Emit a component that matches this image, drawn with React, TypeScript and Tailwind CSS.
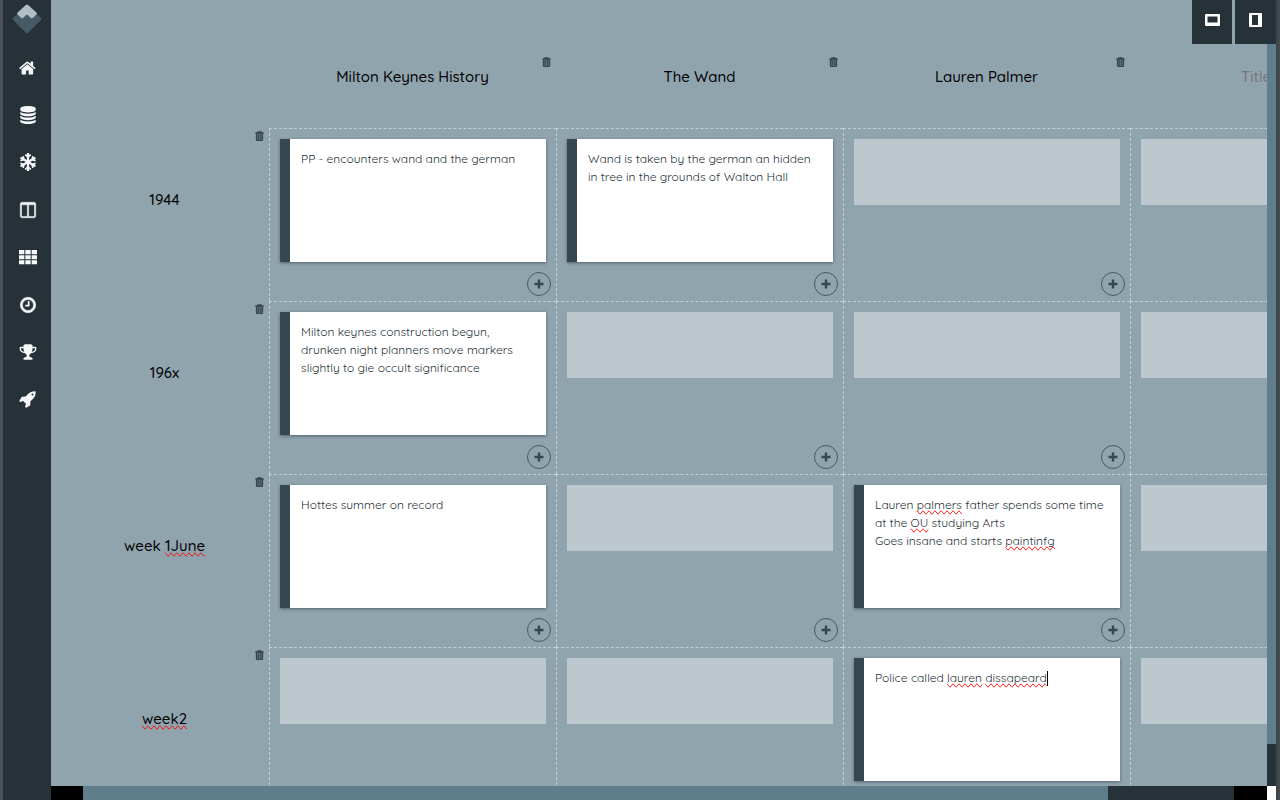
import type { ReactNode } from "react";
import { FaSnowflake } from "react-icons/fa";

type NavItem = { label: string; icon: ReactNode };
type Row = { label: ReactNode; name: string; cells: (ReactNode | null)[] };

function Glyph({ d, bold = false }: { d: string; bold?: boolean }) {
  return (
    <svg viewBox="0 0 1792 1792" className="size-[18px]" fill="currentColor" aria-hidden="true">
      <path d={d} stroke="currentColor" strokeWidth={bold ? 50 : 0} />
    </svg>
  );
}

function Misspelt({ children }: { children: ReactNode }) {
  return <span className="[text-decoration-line:spelling-error]">{children}</span>;
}

function TrashIcon() {
  return (
    <svg viewBox="0 0 9 10" className="h-[10px] w-[9px]" aria-hidden="true">
      <path
        d="M.3 2h8.400M3 2V.8h3V2M1.500 2v6.500q0 1 1 1h4q1 0 1-1V2"
        fill="#5a6b74"
        stroke="#37474f"
        strokeWidth="1.300"
      />
      <path d="M3.400 3.500v4.500M5.600 3.500v4.500" stroke="#37474f" strokeWidth=".8" />
    </svg>
  );
}

const navItems: NavItem[] = [
  {
    label: "Home",
    icon: (
      <Glyph d="M1408 992v480q0 26-19 45t-45 19h-384v-384h-256v384h-384q-26 0-45-19t-19-45v-480q0-1 .5-3t.5-3l575-474 575 474q1 2 1 6zm223-69l-62 74q-8 9-21 11h-3q-13 0-21-7l-692-577-692 577q-12 8-24 7-13-2-21-11l-62-74q-8-10-7-23.5t11-21.5l719-599q32-26 76-26t76 26l244 204v-195q0-14 9-23t23-9h192q14 0 23 9t9 23v408l219 182q10 8 11 21.5t-7 23.5z" />
    ),
  },
  {
    label: "Database",
    icon: (
      <Glyph d="M896 768q237 0 443-43t325-127v170q0 69-103 128t-280 93.5-385 34.5-385-34.5-280-93.5-103-128v-170q119 84 325 127t443 43zm0 768q237 0 443-43t325-127v170q0 69-103 128t-280 93.5-385 34.5-385-34.5-280-93.5-103-128v-170q119 84 325 127t443 43zm0-384q237 0 443-43t325-127v170q0 69-103 128t-280 93.5-385 34.5-385-34.5-280-93.5-103-128v-170q119 84 325 127t443 43zm0-1152q208 0 385 34.5t280 93.5 103 128v128q0 69-103 128t-280 93.5-385 34.5-385-34.5-280-93.5-103-128v-128q0-69 103-128t280-93.5 385-34.5z" />
    ),
  },
  { label: "Snowflake", icon: <FaSnowflake className="size-[18px]" aria-hidden="true" /> },
  {
    label: "Columns",
    icon: (
      <Glyph
        bold
        d="M288 1536h544v-1152h-576v1120q0 13 9.5 22.5t22.5 9.5zm1248-32v-1120h-576v1152h544q13 0 22.500-9.500t9.500-22.500zm128-1216v1216q0 66-47 113t-113 47h-1216q-66 0-113-47t-47-113v-1216q0-66 47-113t113-47h1216q66 0 113 47t47 113z"
      />
    ),
  },
  {
    label: "Grid",
    icon: (
      <Glyph d="M0 210h530v400H0zM630 210h530v400H630zM1260 210h530v400h-530zM0 710h530v400H0zM630 710h530v400H630zM1260 710h530v400h-530zM0 1210h530v400H0zM630 1210h530v400H630zM1260 1210h530v400h-530z" />
    ),
  },
  {
    label: "Timeline",
    icon: (
      <Glyph
        bold
        d="M1024 544v448q0 14-9 23t-23 9h-320q-14 0-23-9t-9-23v-64q0-14 9-23t23-9h224v-352q0-14 9-23t23-9h64q14 0 23 9t9 23zm416 352q0-148-73-273t-198-198-273-73-273 73-198 198-73 273 73 273 198 198 273 73 273-73 198-198 73-273zm224 0q0 209-103 385.5t-279.5 279.5-385.5 103-385.5-103-279.5-279.5-103-385.5 103-385.5 279.5-279.5 385.5-103 385.5 103 279.5 279.5 103 385.5z"
      />
    ),
  },
  {
    label: "Goals",
    icon: (
      <Glyph d="M522 883q-74-162-74-371h-256v96q0 78 94.5 162t235.5 113zm1078-275v-96h-256q0 209-74 371 141-29 235.5-113t94.5-162zm128-128v128q0 71-41.5 143t-112 130-173 97.5-215.5 44.5q-42 54-95 95-38 34-52.5 72.5t-14.5 89.5q0 54 30.5 91t97.5 37q75 0 133.5 45.5t58.5 114.5v64q0 14-9 23t-23 9h-832q-14 0-23-9t-9-23v-64q0-69 58.5-114.5t133.5-45.5q67 0 97.5-37t30.5-91q0-51-14.5-89.5t-52.5-72.5q-53-41-95-95-113-5-215.5-44.5t-173-97.5-112-130-41.5-143v-128q0-40 28-68t68-28h288v-96q0-66 47-113t113-47h576q66 0 113 47t47 113v96h288q40 0 68 28t28 68z" />
    ),
  },
  {
    label: "Launch",
    icon: (
      <Glyph d="M1440 448q0-40-28-68t-68-28-68 28-28 68 28 68 68 28 68-28 28-68zm224-288q0 249-75.5 430.5t-253.5 360.5q-81 80-195 176l-20 379q-2 16-16 26l-384 224q-7 4-16 4-12 0-23-9l-64-64q-13-14-8-32l85-276-281-281-276 85q-3 1-9 1-14 0-23-9l-64-64q-17-19-5-39l224-384q10-14 26-16l379-20q96-114 176-195 188-187 358-258t431-71q14 0 24 9.500t10 22.500z" />
    ),
  },
];

const columns = ["Milton Keynes History", "The Wand", "Lauren Palmer"];

const rows: Row[] = [
  {
    name: "1944",
    label: "1944",
    cells: [
      "PP - encounters wand and the german",
      <>
        Wand is taken by the german an hidden
        <br />
        in tree in the grounds of Walton Hall
      </>,
      null,
      null,
    ],
  },
  {
    name: "196x",
    label: "196x",
    cells: [
      <>
        Milton keynes construction begun,
        <br />
        drunken night planners move markers
        <br />
        slightly to gie occult significance
      </>,
      null,
      null,
      null,
    ],
  },
  {
    name: "week 1June",
    label: (
      <>
        week <Misspelt>1June</Misspelt>
      </>
    ),
    cells: [
      "Hottes summer on record",
      null,
      <>
        Lauren <Misspelt>palmers</Misspelt> father spends some time
        <br />
        at the <Misspelt>OU</Misspelt> studying Arts
        <br />
        Goes insane and starts <Misspelt>paintinfg</Misspelt>
      </>,
      null,
    ],
  },
  {
    name: "week2",
    label: <Misspelt>week2</Misspelt>,
    cells: [
      null,
      null,
      <>
        Police called <Misspelt>lauren</Misspelt> <Misspelt>dissapeard</Misspelt>
        <span className="inline-block h-[15px] w-px bg-black align-middle" />
      </>,
      null,
    ],
  },
];

function Logo() {
  return (
    <svg viewBox="0 0 30 30" className="size-[30px]" aria-hidden="true">
      <path
        d="M5.500 9.500L1.300 13.800q-1.200 1.200 0 2.400L13.800 28.700q1.200 1.200 2.400 0L28.700 16.200q1.200-1.200 0-2.400L24.500 9.500 20 14.200 15 9.800 10 14.200z"
        fill="#455a64"
      />
      <path
        d="M5.600 8.600L13.800 1q1.200-1 2.400 0L24.400 8.600q.8 1 0 2L21 13.800q-1.200 1-2.300 0L16 11.300q-1-1-2 0L11.300 13.800q-1.100 1-2.300 0L5.600 10.600q-.8-1 0-2z"
        fill="#b0bec5"
      />
    </svg>
  );
}

function Sidebar() {
  return (
    <aside className="flex w-[51px] shrink-0 flex-col items-center border-l-[3px] border-[#4a5357] bg-[#263238]">
      <a href="#home" aria-label="Projects" className="flex h-11 items-start pt-1">
        <Logo />
      </a>
      <nav className="flex h-[379px] w-full flex-col pl-px">
        {navItems.map((item) => (
          <a
            key={item.label}
            href={"#" + item.label.toLowerCase()}
            aria-label={item.label}
            className="flex flex-1 items-center justify-center text-[#f5f7f8]"
          >
            {item.icon}
          </a>
        ))}
      </nav>
    </aside>
  );
}

function Cell({ children, label }: { children: ReactNode | null; label: string }) {
  return (
    <div className="flex h-[172px] flex-col px-[10px] pt-[10px]">
      <div className="h-[123px]">
        {children === null ? (
          <div className="h-[66px] bg-[#bcc8ce]" />
        ) : (
          <div
            contentEditable
            suppressContentEditableWarning
            spellCheck={false}
            role="textbox"
            aria-label={label}
            className="h-full border-l-10 border-[#37474f] bg-white px-[11px] py-[11px] text-xs leading-[18px] text-[#263238] shadow-[0_1px_3px_rgba(38,50,56,0.6)] outline-none"
          >
            {children}
          </div>
        )}
      </div>
      <button
        type="button"
        aria-label="Add card"
        className="mt-[10px] -mr-[5px] flex size-6 shrink-0 items-center justify-center self-end rounded-full border border-[#455a64]"
      >
        <svg viewBox="0 0 10 10" className="size-[10px]" aria-hidden="true">
          <path d="M5 .5v9M.5 5h9" stroke="#37474f" strokeWidth="2.400" />
        </svg>
      </button>
    </div>
  );
}

function Board() {
  return (
    <table className="w-[1366px] table-fixed border-separate border-spacing-0 text-[15px] leading-6 text-black">
      <thead>
        <tr className="h-32">
          <td className="w-[218px]" />
          {columns.map((title) => (
            <th key={title} scope="col" className="w-[287px] p-0 align-top font-medium">
              <div className="flex h-[65px] justify-end pt-[57px] pr-[5px]">
                <button type="button" aria-label={"Delete " + title} className="h-[10px]">
                  <TrashIcon />
                </button>
              </div>
              <div contentEditable suppressContentEditableWarning spellCheck={false} className="outline-none">
                {title}
              </div>
            </th>
          ))}
          <th scope="col" className="w-[287px] p-0 pt-[65px] align-top font-medium">
            <input
              type="text"
              aria-label="New column title"
              placeholder="Title"
              className="block h-6 w-full pl-[111px] placeholder:text-[#757575] focus:outline-none"
            />
          </th>
        </tr>
      </thead>
      <tbody>
        {rows.map((row) => (
          <tr key={row.name}>
            <th scope="row" className="p-0 align-top font-medium">
              <div className="flex h-[60px] justify-end pt-[3px] pr-[5px]">
                <button type="button" aria-label={"Delete " + row.name} className="h-[10px]">
                  <TrashIcon />
                </button>
              </div>
              <div
                contentEditable
                suppressContentEditableWarning
                spellCheck={false}
                className="pl-[9px] outline-none"
              >
                {row.label}
              </div>
            </th>
            {row.cells.map((cell, index) => (
              <td
                key={index}
                className="border-t border-l border-dashed border-[#c3ced3] p-0 align-top"
              >
                <Cell label={row.name + ", " + (columns[index] ?? "new column")}>{cell}</Cell>
              </td>
            ))}
          </tr>
        ))}
      </tbody>
    </table>
  );
}

function PanelToggles() {
  const button = "flex h-11 items-center justify-center bg-[#263238]";
  return (
    <div className="absolute top-0 right-0 flex gap-[3px]">
      <button type="button" aria-label="Toggle bottom panel" className={button + " w-10"}>
        <svg viewBox="0 0 15 12" className="mb-1 h-3 w-[15px]" aria-hidden="true">
          <path
            fillRule="evenodd"
            fill="#fff"
            d="M1 0h13q1 0 1 1v10q0 1-1 1H1q-1 0-1-1V1q0-1 1-1zM2.500 2.500v6h10v-6z"
          />
        </svg>
      </button>
      <button type="button" aria-label="Toggle side panel" className={button + " w-[41px]"}>
        <svg viewBox="0 0 13 14" className="mb-1 h-[14px] w-[13px]" aria-hidden="true">
          <path
            fillRule="evenodd"
            fill="#fff"
            d="M1 0h11q1 0 1 1v12q0 1-1 1H1q-1 0-1-1V1q0-1 1-1zM3 2v10h6V2z"
          />
        </svg>
      </button>
    </div>
  );
}

export default function App() {
  return (
    <div className="flex h-screen overflow-hidden bg-[#90a4ae] font-['Quicksand','Lato',sans-serif]">
      <Sidebar />
      <main className="relative flex min-w-0 flex-1 flex-col">
        <div className="flex min-h-0 flex-1">
          <div className="min-w-0 flex-1 overflow-hidden">
            <Board />
          </div>
          <div className="flex w-[9px] flex-col justify-end bg-[#607d8b]">
            <div className="h-[42px] bg-[#263238]" />
          </div>
        </div>
        <div className="flex h-[14px] shrink-0">
          <div className="w-8 bg-black" />
          <div className="flex-1 bg-[#607d8b]" />
          <div className="w-[126px] bg-[#263238]" />
          <div className="w-[33px] bg-black" />
          <div className="w-[9px] bg-white" />
        </div>
        <PanelToggles />
      </main>
      <div className="w-1 shrink-0 border-r-2 border-[#474b4c] bg-[#37474f]" />
    </div>
  );
}
